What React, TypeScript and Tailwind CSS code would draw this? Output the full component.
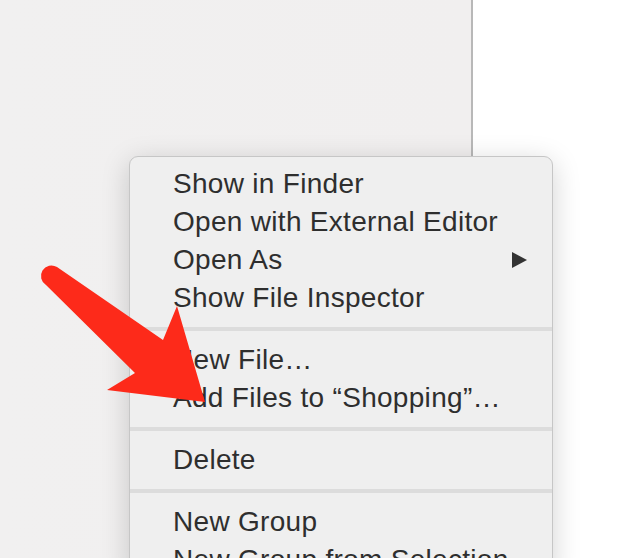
import React from 'react';

const Row: React.FC<{ label: string; submenu?: boolean }> = ({ label, submenu }) => (
  <div className="h-[38px] leading-[38px] pl-[43px] pr-[24px] flex justify-between items-center">
    <span>{label}</span>
    {submenu && (
      <svg width="17" height="18" viewBox="0 0 17 18">
        <path d="M1 1 L16 9 L1 17 Z" fill="#333" />
      </svg>
    )}
  </div>
);

const Separator: React.FC = () => (
  <div className="h-[24px] flex items-center">
    <div className="h-[4px] w-full bg-[#dcdcdc]" />
  </div>
);

const App: React.FC = () => {
  return (
    <div className="relative w-[632px] h-[558px] overflow-hidden bg-white font-['Liberation_Sans',Arial,sans-serif]">
      <div className="flex h-full">
        <div className="w-[473px] h-full bg-gradient-to-r from-[#f1f0f0] to-[#f1efef] border-r-2 border-[#b8b8b8]" />
        <div className="flex-1 bg-white" />
      </div>

      {/* context menu */}
      <div className="absolute left-[129px] top-[156px] w-[424px] h-[420px] rounded-[9px] border border-[#c6c6c6] bg-[#efefef] shadow-[0_6px_28px_rgba(0,0,0,0.18)] pt-[8px] text-[28px] tracking-[0.3px] text-[#2e2e2e]">
        <Row label="Show in Finder" />
        <Row label="Open with External Editor" />
        <Row label="Open As" submenu />
        <Row label="Show File Inspector" />
        <Separator />
        <Row label="New File…" />
        <Row label="Add Files to “Shopping”…" />
        <Separator />
        <Row label="Delete" />
        <Separator />
        <Row label="New Group" />
        <Row label="New Group from Selection" />
      </div>

      {/* red annotation arrow */}
      <svg className="absolute left-0 top-0" width="632" height="558" viewBox="0 0 632 558">
        <path
          d="M57 267 L163 340 L177 306 L205 402 L107 390 L135 373 L46 285 A10 10 0 0 1 57 267 Z"
          fill="#fd2a1a"
        />
      </svg>
    </div>
  );
};

export default App;
